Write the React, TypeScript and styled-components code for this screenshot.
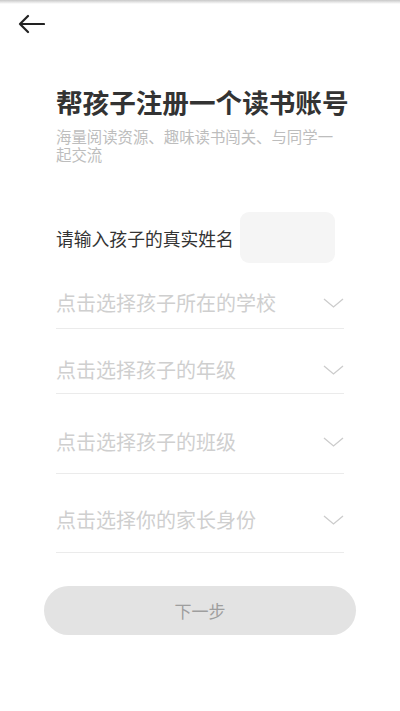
import styled, { createGlobalStyle } from 'styled-components'

const GlobalStyle = createGlobalStyle`
  html, body {
    margin: 0;
    padding: 0;
    background: #ffffff;
  }
  body {
    font-family: "Noto Sans CJK SC", "Noto Sans", sans-serif;
  }
`

const Page = styled.div`
  width: 400px;
  height: 711px;
  background: #ffffff;
  position: relative;
  overflow: hidden;
  &::before {
    content: '';
    position: absolute;
    left: 0;
    right: 0;
    top: 0;
    height: 4px;
    background: linear-gradient(#c8c8c8, rgba(230, 230, 230, 0));
  }
`

const TopBar = styled.div`
  height: 48px;
  display: flex;
  align-items: center;
  padding-left: 17px;
`

const BackButton = styled.button`
  border: 0;
  background: none;
  padding: 0;
  width: 28px;
  height: 20px;
  display: flex;
  align-items: center;
  cursor: pointer;
`

const Header = styled.div`
  padding: 38px 40px 0 56px;
`

const Title = styled.h1`
  margin: 0;
  font-size: 26.6px;
  line-height: 32px;
  font-weight: 700;
  color: #333333;
  white-space: nowrap;
`

const Subtitle = styled.p`
  margin: 9px 0 0;
  width: 284px;
  font-size: 15.4px;
  line-height: 18px;
  color: #bdbdbd;
`

const Form = styled.div`
  padding: 0 56px;
  margin-top: 49px;
  display: flex;
  flex-direction: column;
`

const NameRow = styled.div`
  display: flex;
  align-items: center;
  gap: 6px;
`

const NameLabel = styled.label`
  font-size: 17.8px;
  color: #333333;
  white-space: nowrap;
`

const NameInput = styled.input`
  width: 95px;
  height: 51px;
  box-sizing: border-box;
  border: 0;
  border-radius: 9px;
  background: #f5f5f5;
  outline: none;
  padding: 0 10px;
  font-size: 16px;
`

const SelectRow = styled.div<{ $top: number; $bottom: number }>`
  display: flex;
  align-items: center;
  justify-content: space-between;
  padding-top: ${(p) => p.$top}px;
  padding-bottom: ${(p) => p.$bottom}px;
  border-bottom: 1px solid #ebebeb;
  cursor: pointer;
`

const SelectText = styled.span`
  font-size: 20px;
  line-height: 28px;
  color: #cfcfcf;
  white-space: nowrap;
`

const Chevron = styled.svg`
  width: 21px;
  height: 10px;
  flex-shrink: 0;
`

const ButtonWrap = styled.div`
  padding: 0 44px 0 44px;
  margin-top: 33px;
`

const NextButton = styled.button`
  width: 100%;
  height: 49px;
  border: 0;
  border-radius: 25px;
  background: #e3e3e3;
  color: #9e9e9e;
  font-family: inherit;
  font-size: 17px;
`

const selects = [
  { text: '点击选择孩子所在的学校', top: 26, bottom: 11 },
  { text: '点击选择孩子的年级', top: 27, bottom: 9 },
  { text: '点击选择孩子的班级', top: 34, bottom: 17 },
  { text: '点击选择你的家长身份', top: 32, bottom: 18 },
]

export default function App() {
  return (
    <>
      <GlobalStyle />
      <Page>
        <TopBar>
          <BackButton aria-label="返回">
            <svg width="28" height="20" viewBox="0 0 28 20" fill="none">
              <path
                d="M27 10H3M11 2L3 10L11 18"
                stroke="#222222"
                strokeWidth="2.2"
                strokeLinecap="round"
                strokeLinejoin="round"
              />
            </svg>
          </BackButton>
        </TopBar>
        <Header>
          <Title>帮孩子注册一个读书账号</Title>
          <Subtitle>海量阅读资源、趣味读书闯关、与同学一起交流</Subtitle>
        </Header>
        <Form>
          <NameRow>
            <NameLabel>请输入孩子的真实姓名</NameLabel>
            <NameInput />
          </NameRow>
          {selects.map((s) => (
            <SelectRow key={s.text} $top={s.top} $bottom={s.bottom}>
              <SelectText>{s.text}</SelectText>
              <Chevron viewBox="0 0 21 10" fill="none">
                <path d="M1 1L10.5 9L20 1" stroke="#cccccc" strokeWidth="1.3" />
              </Chevron>
            </SelectRow>
          ))}
        </Form>
        <ButtonWrap>
          <NextButton>下一步</NextButton>
        </ButtonWrap>
      </Page>
    </>
  )
}
